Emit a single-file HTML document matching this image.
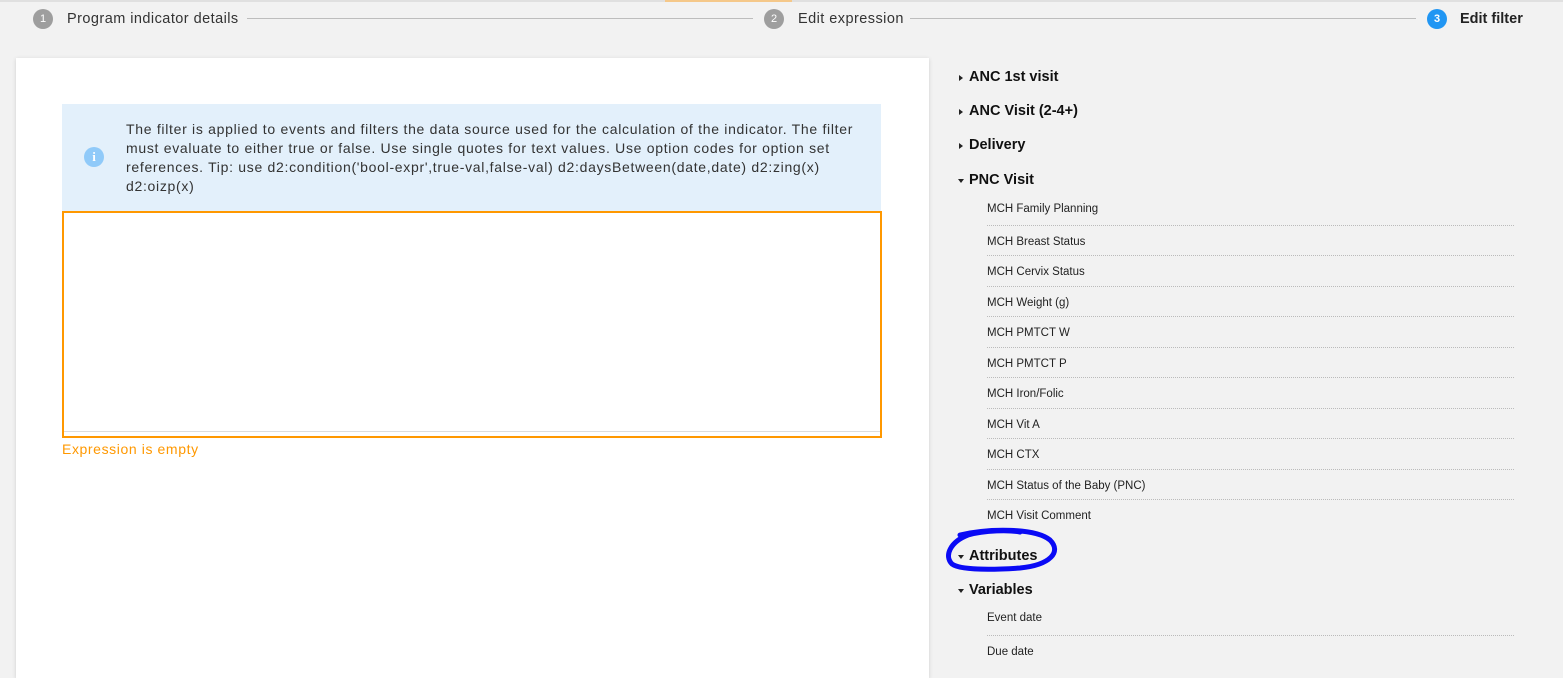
<!DOCTYPE html>
<html><head><meta charset="utf-8"><style>
*{box-sizing:border-box;margin:0;padding:0}
body{width:1563px;height:655px;overflow:hidden;background:#f2f2f2;font-family:"Liberation Sans",sans-serif;position:relative;color:#222}
.topbar{position:absolute;left:0;top:0;width:1563px;height:2px;background:#e0e0e0}
.topor{position:absolute;left:665px;top:0;width:127px;height:2px;background:#f5c88a}
.step{position:absolute;top:9px;height:20px;display:flex;align-items:center;font-size:14.5px;color:#333;letter-spacing:.45px}
.num{width:20px;height:20px;border-radius:50%;background:#9e9e9e;color:#fff;font-size:11px;display:flex;align-items:center;justify-content:center;margin-right:14px;letter-spacing:0}
.line{position:absolute;top:18px;height:1px;background:#bdbdbd}
.card{position:absolute;left:16px;top:58px;width:913px;height:620px;background:#fff;box-shadow:0 1px 4px rgba(0,0,0,.15)}
.info{position:absolute;left:62px;top:104px;width:819px;height:107px;background:#e3f0fb}
.info p{position:absolute;left:64px;top:16px;width:728px;font-size:14px;line-height:19px;color:#333;letter-spacing:.7px}
.icon{position:absolute;left:22px;top:43px;width:20px;height:20px;border-radius:50%;background:#90caf9;color:#fff;font-size:13px;font-weight:bold;text-align:center;line-height:20px;font-family:"Liberation Serif",serif}
.ta{position:absolute;left:62px;top:211px;width:820px;height:227px;border:2px solid #ff9800}
.ta .in{position:absolute;left:0;top:0;right:0;bottom:4px;border-bottom:1px solid #ddd}
.err{position:absolute;left:62px;top:441px;font-size:14px;color:#ff9800;letter-spacing:.6px}
.h{position:absolute;left:969px;font-size:14.5px;font-weight:bold;color:#111;transform:translateY(-50%);margin-top:2px}
.h:before{content:"";position:absolute;left:-10px;top:6px;border-left:4px solid #222;border-top:3px solid transparent;border-bottom:3px solid transparent}
.h.o:before{border-top:4px solid #222;border-left:3px solid transparent;border-right:3px solid transparent;border-bottom:0;left:-11px;top:7px}
.it{position:absolute;left:987px;font-size:11.5px;color:#222;transform:translateY(-50%);margin-top:2px}
.sep{position:absolute;left:987px;width:527px;border-top:1px dotted #bbb}
</style></head><body>
<div class="topbar"></div><div class="topor"></div>
<div class="step" style="left:33px"><div class="num">1</div>Program indicator details</div>
<div class="line" style="left:247px;width:506px"></div>
<div class="step" style="left:764px"><div class="num">2</div>Edit expression</div>
<div class="line" style="left:910px;width:506px"></div>
<div class="step" style="left:1427px;font-weight:bold;color:#222;letter-spacing:0"><div class="num" style="background:#2196f3;margin-right:13px">3</div>Edit filter</div>

<div class="card"></div>
<div class="info"><div class="icon">i</div><p>The filter is applied to events and filters the data source used for the calculation of the indicator. The filter must evaluate to either true or false. Use single quotes for text values. Use option codes for option set references. Tip: use d2:condition('bool-expr',true-val,false-val) d2:daysBetween(date,date) d2:zing(x) d2:oizp(x)</p></div>
<div class="ta"><div class="in"></div></div>
<div class="err">Expression is empty</div>

<div class="h" style="top:75px">ANC 1st visit</div>
<div class="h" style="top:109px">ANC Visit (2-4+)</div>
<div class="h" style="top:143px">Delivery</div>
<div class="h o" style="top:178px">PNC Visit</div>
<div class="it" style="top:207px">MCH Family Planning</div><div class="sep" style="top:225px"></div>
<div class="it" style="top:240px">MCH Breast Status</div><div class="sep" style="top:255px"></div>
<div class="it" style="top:270px">MCH Cervix Status</div><div class="sep" style="top:286px"></div>
<div class="it" style="top:301px">MCH Weight (g)</div><div class="sep" style="top:316px"></div>
<div class="it" style="top:331px">MCH PMTCT W</div><div class="sep" style="top:347px"></div>
<div class="it" style="top:362px">MCH PMTCT P</div><div class="sep" style="top:377px"></div>
<div class="it" style="top:392px">MCH Iron/Folic</div><div class="sep" style="top:408px"></div>
<div class="it" style="top:423px">MCH Vit A</div><div class="sep" style="top:438px"></div>
<div class="it" style="top:453px">MCH CTX</div><div class="sep" style="top:469px"></div>
<div class="it" style="top:484px">MCH Status of the Baby (PNC)</div><div class="sep" style="top:499px"></div>
<div class="it" style="top:514px">MCH Visit Comment</div>
<div class="h o" style="top:554px">Attributes</div>
<div class="h o" style="top:588px">Variables</div>
<div class="it" style="top:616px">Event date</div><div class="sep" style="top:635px"></div>
<div class="it" style="top:650px">Due date</div>
<svg style="position:absolute;left:0;top:0" width="1563" height="655"><path d="M960 535 C990 528 1035 528 1050 540 C1062 552 1050 565 1020 568 C990 570 960 570 952 564 C944 556 950 542 968 535 C985 530 1010 530 1020 532" fill="none" stroke="#0a0af5" stroke-width="5" stroke-linecap="round"/></svg>
</body></html>
